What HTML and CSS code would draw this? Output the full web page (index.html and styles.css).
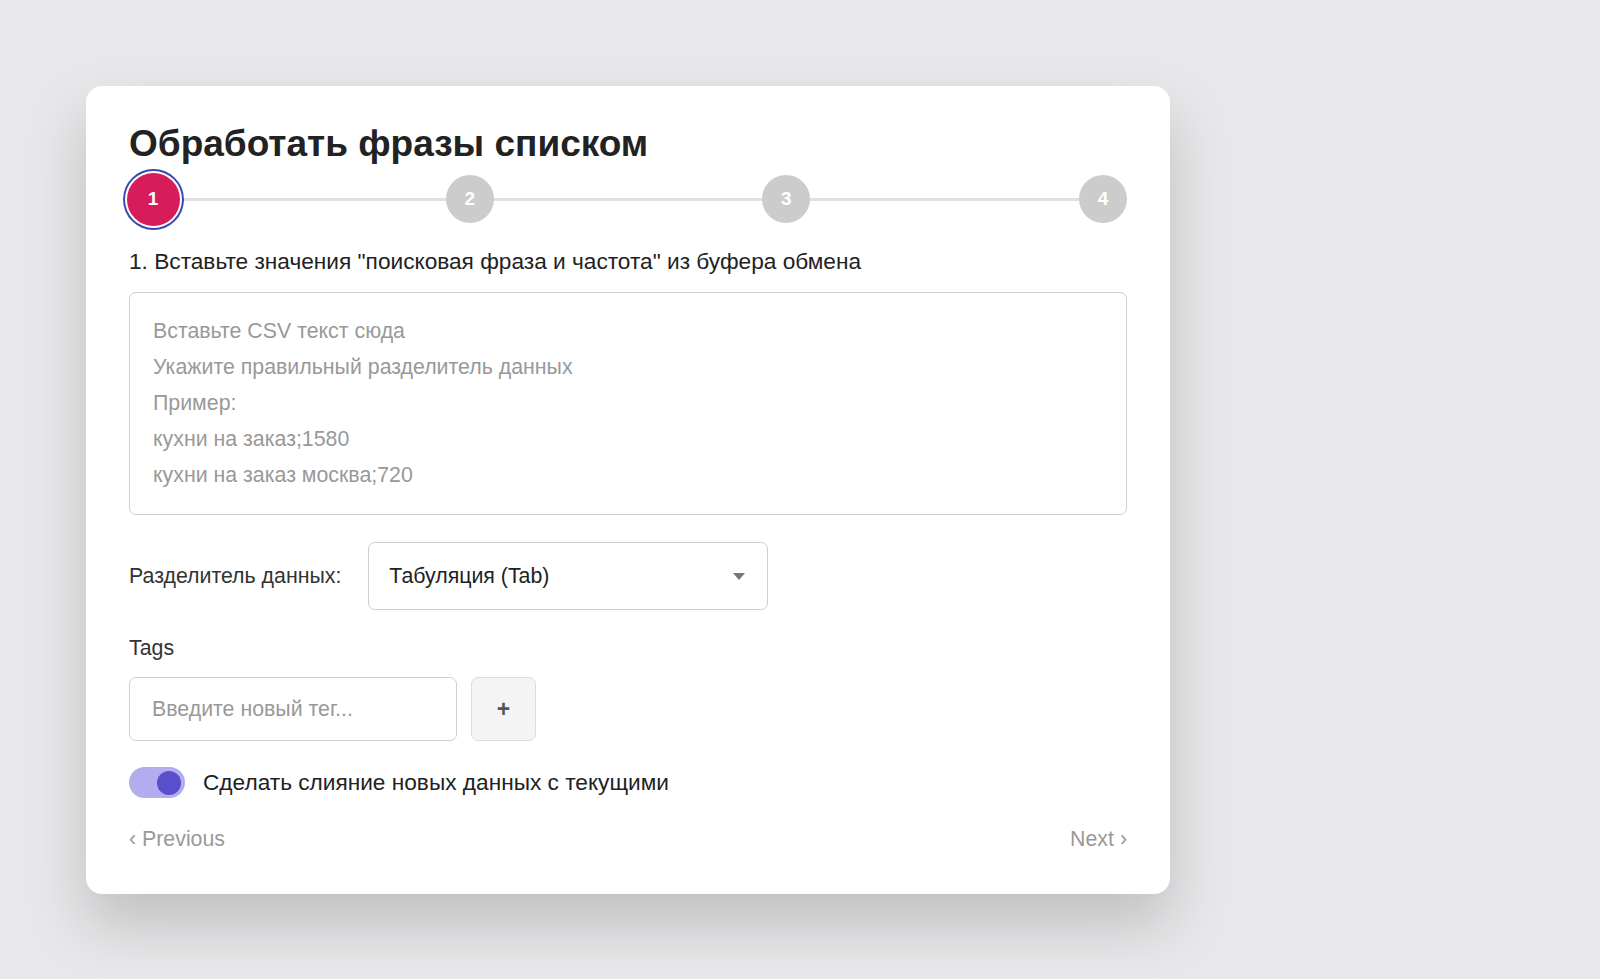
FILE: index.html
```html
<!DOCTYPE html>
<html lang="ru">
  <head>
    <meta charset="UTF-8" />
    <meta name="viewport" content="width=device-width, initial-scale=1.0" />
    <title>Обработать фразы списком</title>
    <link rel="stylesheet" href="styles.css">
  </head>
  <body>
    <div class="card">
      <h1 class="title">Обработать фразы списком</h1>

      <div class="stepper">
        <div class="step active">1</div>
        <div class="step-line"></div>
        <div class="step">2</div>
        <div class="step-line"></div>
        <div class="step">3</div>
        <div class="step-line"></div>
        <div class="step">4</div>
      </div>

      <div class="step-title">1. Вставьте значения "поисковая фраза и частота" из буфера обмена</div>

      <textarea class="csv-input" placeholder="Вставьте CSV текст сюда&#10;Укажите правильный разделитель данных&#10;Пример:&#10;кухни на заказ;1580&#10;кухни на заказ москва;720"></textarea>

      <div class="separator-row">
        <label class="label">Разделитель данных:</label>
        <div class="select-wrap">
          <select class="select">
            <option>Табуляция (Tab)</option>
            <option>Точка с запятой (;)</option>
            <option>Запятая (,)</option>
          </select>
        </div>
      </div>

      <div class="label tags-label">Tags</div>
      <div class="tags-row">
        <input class="tag-input" type="text" placeholder="Введите новый тег..." />
        <button class="tag-add">+</button>
      </div>

      <label class="toggle-row">
        <span class="toggle on"><span class="knob"></span></span>
        <span class="toggle-text">Сделать слияние новых данных с текущими</span>
      </label>

      <div class="nav">
        <a class="nav-link">&lsaquo; Previous</a>
        <a class="nav-link">Next &rsaquo;</a>
      </div>
    </div>
  </body>
</html>
```

FILE: styles.css
```css
* {
  margin: 0;
  padding: 0;
  box-sizing: border-box;
}

body {
  background: #e8e8ea;
  font-family: "Liberation Sans", Arial, sans-serif;
  color: #222;
  padding: 86px 0 0 86px;
  min-height: 979px;
}

.card {
  width: 1084px;
  background: #fff;
  border-radius: 16px;
  padding: 36px 43px 43px 42px;
  box-shadow: 0 30px 60px rgba(0, 0, 0, 0.18);
}

.title {
  font-size: 37px;
  font-weight: bold;
  line-height: 43px;
  color: #222;
  margin-left: 1px;
}

/* stepper */
.stepper {
  display: flex;
  align-items: center;
  height: 48px;
  margin: 10px 0 0 1px;
}

.step {
  width: 48px;
  height: 48px;
  border-radius: 50%;
  background: #cccccc;
  color: #fff;
  font-weight: bold;
  font-size: 19px;
  display: flex;
  align-items: center;
  justify-content: center;
  flex-shrink: 0;
}

.step.active {
  width: 53px;
  height: 53px;
  margin: 0 -2.5px;
  background: #d81b5a;
  box-shadow: 0 0 0 2px #fff, 0 0 0 4px #3a48ad;
  position: relative;
  z-index: 1;
}

.step-line {
  flex: 1;
  height: 3px;
  background: #e0e0e0;
}

.step-title {
  font-size: 22.67px;
  line-height: 26px;
  margin-top: 25px;
  margin-left: 1px;
}

.csv-input {
  display: block;
  width: 998px;
  height: 223px;
  margin: 18px 0 0 1px;
  padding: 20px 23px;
  border: 1px solid #cfcfcf;
  border-radius: 7px;
  font-family: inherit;
  font-size: 21.33px;
  line-height: 36px;
  color: #222;
  resize: none;
  outline: none;
}

.csv-input::placeholder,
.tag-input::placeholder {
  color: #999;
}

.separator-row {
  display: flex;
  align-items: center;
  margin: 27px 0 0 1px;
  gap: 27px;
}

.label {
  font-size: 21.33px;
  line-height: 24px;
  color: #333;
}

.select-wrap {
  position: relative;
  width: 400px;
}

.select-wrap::after {
  content: "";
  position: absolute;
  right: 23px;
  top: 31px;
  border-left: 6px solid transparent;
  border-right: 6px solid transparent;
  border-top: 7px solid #777;
  pointer-events: none;
}

.select {
  appearance: none;
  -webkit-appearance: none;
  width: 100%;
  height: 68px;
  padding: 0 20px;
  border: 1px solid #cfcfcf;
  border-radius: 7px;
  background: #fff;
  font-family: inherit;
  font-size: 21.33px;
  color: #222;
  outline: none;
}

.tags-label {
  margin: 26px 0 0 1px;
}

.tags-row {
  display: flex;
  gap: 14px;
  margin: 17px 0 0 1px;
}

.tag-input {
  width: 328px;
  height: 64px;
  padding: 0 22px;
  border: 1px solid #cfcfcf;
  border-radius: 7px;
  font-family: inherit;
  font-size: 21.33px;
  color: #222;
  outline: none;
}

.tag-add {
  width: 65px;
  height: 64px;
  border: 1px solid #dcdcdc;
  border-radius: 7px;
  background: #f4f4f4;
  font-family: inherit;
  font-size: 23px;
  font-weight: bold;
  color: #555;
}

.toggle-row {
  display: flex;
  align-items: center;
  gap: 18px;
  margin: 26px 0 0 1px;
}

.toggle {
  width: 56px;
  height: 31px;
  border-radius: 16px;
  background: #b3acef;
  display: flex;
  align-items: center;
  padding: 0 4px;
}

.toggle.on {
  justify-content: flex-end;
}

.knob {
  width: 24px;
  height: 24px;
  border-radius: 50%;
  background: #5a4fca;
}

.toggle-text {
  font-size: 22.67px;
  color: #222;
}

.nav {
  display: flex;
  justify-content: space-between;
  margin: 29px 0 0 1px;
  font-size: 21.33px;
  line-height: 24px;
}

.nav-link {
  color: #999;
  cursor: pointer;
}
```
